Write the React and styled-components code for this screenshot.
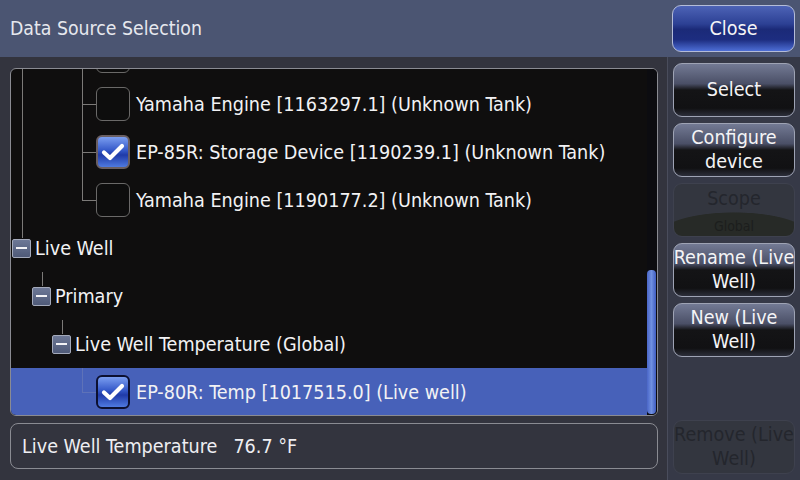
import React from "react";
import styled, { createGlobalStyle, css } from "styled-components";

const GlobalStyle = createGlobalStyle`
  html, body {
    margin: 0;
    padding: 0;
    background: #33343e;
  }
  body {
    font-family: "DejaVu Sans Condensed", "DejaVu Sans", sans-serif;
    color: #f0f0f2;
  }
`;

const Screen = styled.div`
  width: 800px;
  height: 480px;
  display: flex;
  flex-direction: column;
  overflow: hidden;
  background: #33343e;
`;

const Header = styled.div`
  height: 57px;
  flex: none;
  display: flex;
  align-items: center;
  justify-content: space-between;
  background: #4b5572;
`;

const Title = styled.div`
  padding-left: 10px;
  font-size: 19.3px;
  color: #e6e8ee;
`;

const HeaderSlot = styled.div`
  width: 133px;
  padding: 0 5px;
  box-sizing: border-box;
`;

const Body = styled.div`
  flex: 1;
  display: flex;
  min-height: 0;
`;

const Main = styled.div`
  flex: 1;
  display: flex;
  flex-direction: column;
  gap: 7px;
  padding: 11px 9px 11px 10px;
  min-width: 0;
`;

const Side = styled.div`
  width: 133px;
  flex: none;
  border-left: 1px solid #4a4d5c;
  background: #363947;
  display: flex;
  flex-direction: column;
  gap: 6px;
  padding: 6px 5px 6px 5px;
  box-sizing: border-box;
`;

const TreePanel = styled.div`
  height: 348px;
  flex: none;
  border: 1px solid #8a8b92;
  border-radius: 6px;
  background: #0f0e0e;
  display: flex;
  overflow: hidden;
  box-sizing: border-box;
`;

const TreeList = styled.div`
  flex: 1;
  margin-top: -37px;
`;

const ScrollTrack = styled.div`
  width: 9px;
  flex: none;
  display: flex;
  flex-direction: column;
  justify-content: flex-end;
  padding: 0 1px 1px 0;
  background: #0c0c10;
`;

const ScrollThumb = styled.div`
  height: 144px;
  border-radius: 4px;
  background: linear-gradient(to right, #4a66c8, #7090e0 50%, #3f5cc0);
`;

const Row = styled.div`
  height: 48px;
  display: flex;
  align-items: center;
  position: relative;
  font-size: 19.6px;
  white-space: nowrap;
  ${(p) =>
    p.$selected &&
    css`
      background: #4761b9;
    `}
`;

const Guides = styled.svg`
  position: absolute;
  left: 0;
  top: 0;
  pointer-events: none;
`;

const Indent = styled.div`
  width: ${(p) => p.$w}px;
  flex: none;
`;

const Expander = styled.div`
  width: 19px;
  height: 19px;
  flex: none;
  box-sizing: border-box;
  border: 1px solid #a4aabb;
  border-radius: 2px;
  background: linear-gradient(#6d7896, #4f5a78);
  display: flex;
  align-items: center;
  justify-content: center;
  margin-right: 4px;
  &::after {
    content: "";
    width: 11px;
    height: 2px;
    background: #f2f2f5;
  }
`;

const Check = styled.div`
  width: 34px;
  height: 34px;
  flex: none;
  box-sizing: border-box;
  border-radius: 6px;
  margin-right: 6px;
  display: flex;
  align-items: center;
  justify-content: center;
  ${(p) =>
    p.$checked
      ? css`
          border: 2px solid ${p.$dark ? "#0c1030" : "#6a5f62"};
          background: linear-gradient(#7b9ef0 0%, #3458c8 45%, #1f3aa8 60%, #4f7ae0 100%);
        `
      : css`
          border: 1px solid #6a6968;
          background: #0d0d0d;
        `}
`;

const Label = styled.span`
  color: #f2f2f4;
`;

const InfoBox = styled.div`
  height: 46px;
  flex: none;
  box-sizing: border-box;
  border: 1px solid #8a8b92;
  border-radius: 8px;
  display: flex;
  align-items: center;
  padding-left: 11px;
  font-size: 19.6px;
  color: #eeeef2;
`;

const Value = styled.span`
  margin-left: 16px;
`;

const Button = styled.div`
  height: ${(p) => p.$h || 54}px;
  flex: none;
  box-sizing: border-box;
  border-radius: 9px;
  display: flex;
  flex-direction: column;
  align-items: center;
  justify-content: center;
  text-align: center;
  white-space: nowrap;
  font-size: 19.6px;
  line-height: 24px;
  color: #f4f4f6;
  border: 1px solid #9ea3b4;
  background: linear-gradient(
    #737a94 0%,
    #4a4f66 38%,
    #141416 50%,
    #111113 85%,
    #2c2e3a 100%
  );
  ${(p) =>
    p.$blue &&
    css`
      border-color: #b4bcd8;
      background: linear-gradient(
        #4d63b6 0%,
        #2c4094 40%,
        #1b2a78 52%,
        #1d2d80 75%,
        #4d6ed6 100%
      );
    `}
  ${(p) =>
    p.$disabled &&
    css`
      border-color: #3e414e;
      color: #24262d;
      background: #33363f;
    `}
  ${(p) => p.$push && "margin-top: auto;"}
`;

const ScopeButton = styled(Button)`
  justify-content: space-between;
  padding: 3px 0 1px;
  background: radial-gradient(ellipse 64% 46% at 50% 100%, #272a27 97%, transparent 100%), #33363f;
`;

const SubLabel = styled.span`
  font-size: 14px;
  line-height: 18px;
  color: #1c1e1d;
`;

const CheckMark = () => (
  <svg width="24" height="20" viewBox="0 0 24 20">
    <path d="M3 10.5 L9 16 L21 4" fill="none" stroke="#ffffff" strokeWidth="4.2" strokeLinecap="round" strokeLinejoin="round" />
  </svg>
);

const LINE = "#7c7a78";

// each row: left edge of its box, box kind, label, guide lines [x, y1, y2], ticks [x1, x2, y]
const rows = [
  { indent: 96, kind: "check", label: "", lines: [[22, 0, 48], [82, 0, 48]], ticks: [[82, 96, 24]] },
  { indent: 96, kind: "check", label: "Yamaha Engine [1163297.1] (Unknown Tank)", lines: [[22, 0, 48], [82, 0, 48]], ticks: [[82, 96, 24]] },
  { indent: 96, kind: "check", checked: true, label: "EP-85R: Storage Device [1190239.1] (Unknown Tank)", lines: [[22, 0, 48], [82, 0, 48]], ticks: [[82, 96, 24]] },
  { indent: 96, kind: "check", label: "Yamaha Engine [1190177.2] (Unknown Tank)", lines: [[22, 0, 48], [82, 0, 24]], ticks: [[82, 96, 24]] },
  { indent: 12, kind: "exp", label: "Live Well", lines: [[22, 0, 14]], ticks: [] },
  { indent: 32, kind: "exp", label: "Primary", lines: [[42, 0, 14]], ticks: [] },
  { indent: 52, kind: "exp", label: "Live Well Temperature (Global)", lines: [[62, 0, 14]], ticks: [] },
  { indent: 96, kind: "check", checked: true, selected: true, label: "EP-80R: Temp [1017515.0] (Live well)", lines: [[82, 0, 24]], ticks: [[82, 96, 24]] },
];

const TreeRow = ({ row }) => (
  <Row $selected={row.selected}>
    <Guides width="100" height="48">
      {row.lines.map(([x, y1, y2], i) => (
        <line key={"l" + i} x1={x - 10.5} y1={y1} x2={x - 10.5} y2={y2} stroke={row.selected ? "#5e72b8" : LINE} strokeWidth="1" />
      ))}
      {row.ticks.map(([x1, x2, y], i) => (
        <line key={"t" + i} x1={x1 - 11} y1={y + 0.5} x2={x2 - 11} y2={y + 0.5} stroke={row.selected ? "#5e72b8" : LINE} strokeWidth="1" />
      ))}
    </Guides>
    <Indent $w={row.indent - 11} />
    {row.kind === "exp" ? (
      <Expander />
    ) : (
      <Check $checked={row.checked} $dark={row.selected}>
        {row.checked && <CheckMark />}
      </Check>
    )}
    {row.label && <Label>{row.label}</Label>}
  </Row>
);

export default function App() {
  return (
    <>
      <GlobalStyle />
      <Screen>
        <Header>
          <Title>Data Source Selection</Title>
          <HeaderSlot>
            <Button $blue $h={47}>Close</Button>
          </HeaderSlot>
        </Header>
        <Body>
          <Main>
            <TreePanel>
              <TreeList>
                {rows.map((row, i) => (
                  <TreeRow key={i} row={row} />
                ))}
              </TreeList>
              <ScrollTrack>
                <ScrollThumb />
              </ScrollTrack>
            </TreePanel>
            <InfoBox>
              <span>Live Well Temperature</span>
              <Value>76.7 °F</Value>
            </InfoBox>
          </Main>
          <Side>
            <Button>Select</Button>
            <Button>
              <span>Configure</span>
              <span>device</span>
            </Button>
            <ScopeButton $disabled>
              <span>Scope</span>
              <SubLabel>Global</SubLabel>
            </ScopeButton>
            <Button>
              <span>Rename (Live</span>
              <span>Well)</span>
            </Button>
            <Button>
              <span>New (Live</span>
              <span>Well)</span>
            </Button>
            <Button $disabled $push>
              <span>Remove (Live</span>
              <span>Well)</span>
            </Button>
          </Side>
        </Body>
      </Screen>
    </>
  );
}
